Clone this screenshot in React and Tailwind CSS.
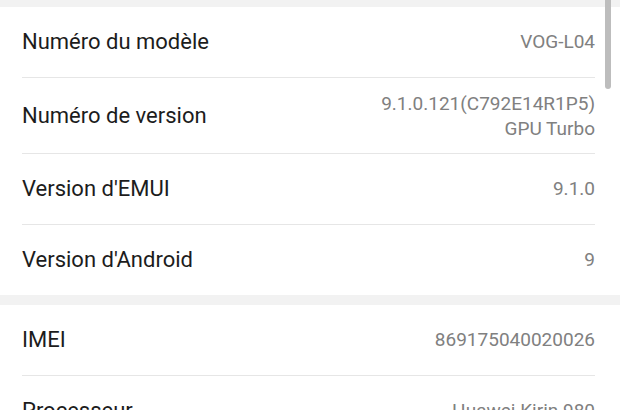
import React from 'react';

const Row = ({ label, value }) => (
  <div className="ml-[22px] mr-[25px] flex items-center justify-between py-[23px] border-b border-[#e6e6e6] last:border-b-0">
    <span className="text-[22px] text-[#1c1c1c] leading-[24px]">{label}</span>
    <span className="text-right text-[19px] text-[#808080] leading-[24px]">{value}</span>
  </div>
);

const App = () => {
  return (
    <div className="relative h-[410px] w-[620px] overflow-hidden bg-[#f2f2f2] font-['Roboto',sans-serif]">
      <div className="h-[7px]" />
      <div className="bg-white">
        <Row label="Numéro du modèle" value="VOG-L04" />
        <div className="ml-[22px] mr-[25px] flex items-center justify-between h-[76px] border-b border-[#e6e6e6]">
          <span className="text-[22px] text-[#1c1c1c] leading-[24px]">Numéro de version</span>
          <span className="text-right text-[19px] text-[#808080] leading-[25px]">
            9.1.0.121(C792E14R1P5)
            <br />
            GPU Turbo
          </span>
        </div>
        <Row label="Version d'EMUI" value="9.1.0" />
        <Row label="Version d'Android" value="9" />
      </div>
      <div className="h-[10px]" />
      <div className="bg-white">
        <Row label="IMEI" value="869175040020026" />
        <Row label="Processeur" value="Huawei Kirin 980" />
      </div>
      <div className="absolute right-[9px] top-0 h-[89px] w-[6px] rounded-b-full bg-[#bdbdbd]" />
    </div>
  );
};

export default App;
